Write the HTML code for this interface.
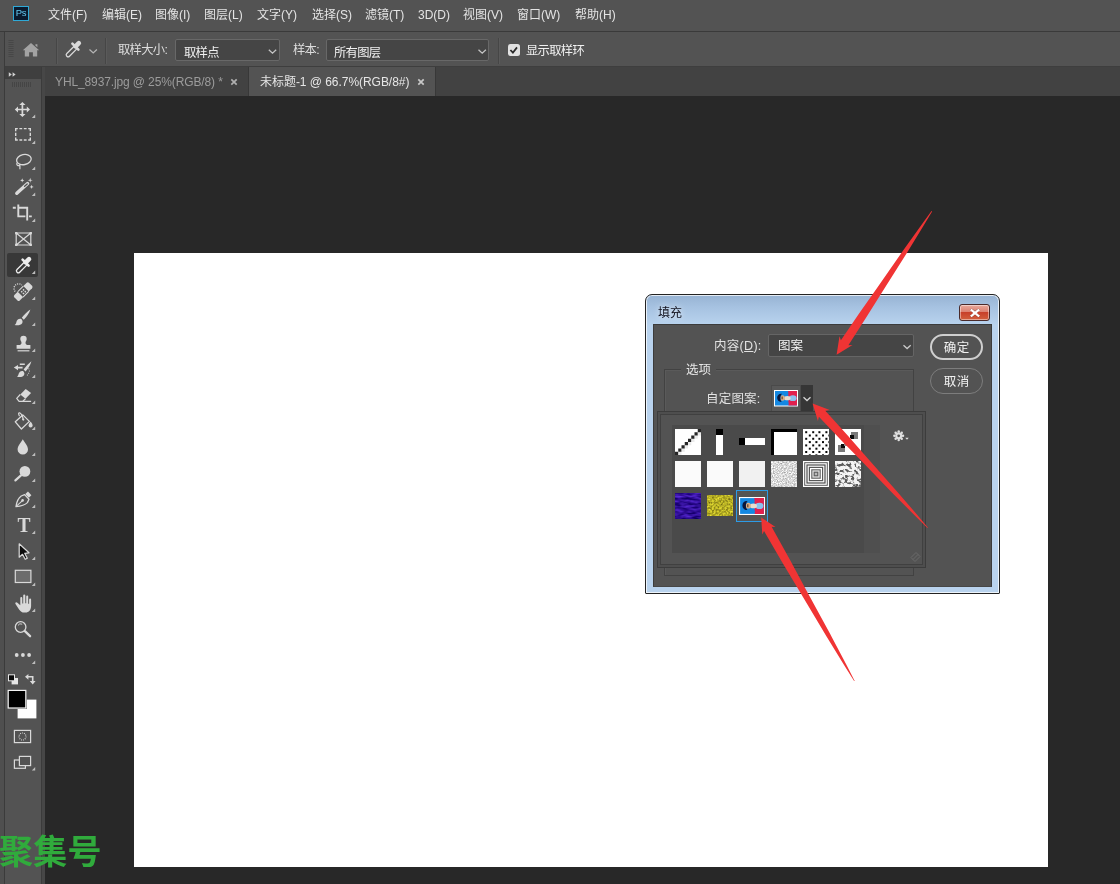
<!DOCTYPE html>
<html lang="zh-CN">
<head>
<meta charset="utf-8">
<title>Photoshop - 填充</title>
<style>
*{box-sizing:border-box;margin:0;padding:0}
html,body{width:1120px;height:884px;overflow:hidden;background:#282828}
body{position:relative;font-family:"Liberation Sans","Noto Sans CJK SC",sans-serif;font-size:12px;color:#dcdcdc}
.abs{position:absolute}
svg{position:absolute;overflow:visible}
#menubar{left:0;top:0;width:1120px;height:31px;background:#535353}
#menubar span{position:absolute;top:7px;line-height:16px;white-space:nowrap;color:#e4e4e4}
#optbar{left:0;top:31px;width:1120px;height:36px;background:#535353;border-top:1px solid #3a3a3a;border-bottom:1px solid #3e3e3e}
#leftedge{left:0;top:32px;width:5px;height:852px;background:#4f4f4f;border-right:1px solid #3b3b3b}
#tabbar{left:42px;top:67px;width:1078px;height:29px;background:#424242}
.tab{position:absolute;top:0;height:29px;line-height:31px;white-space:nowrap;font-size:12px}
#toolbar{left:5px;top:67px;width:36px;height:817px;background:#535353}
#toolhead{left:5px;top:67px;width:36px;height:12px;background:#3f3f3f}
#dockedge{left:41px;top:67px;width:3.600px;height:817px;background:#474747;border-left:1px solid #3b3b3b}
#canvas{left:134px;top:253px;width:914px;height:614px;background:#fff}
.dd{background:#454545;border:1px solid #686868;border-radius:2px;height:22px;top:39px}
.lbl{white-space:nowrap;line-height:16px;color:#dddddd;font-size:12.3px;letter-spacing:-0.7px}
.sep{width:2px;top:38px;height:26px;border-left:1px solid #464646;border-right:1px solid #5a5a5a}

#dlg{left:645px;top:294px;width:355px;height:300px;border:1px solid #232323;border-radius:7px 7px 1px 1px;background:linear-gradient(#97b3d3 0px,#a6c2e1 12px,#b9d3ee 30px,#b9d3ee 100%);box-shadow:inset 0 0 0 1px rgba(255,255,255,.75)}
#dlgtitle{left:12px;top:10px;color:#10101c;font-size:12px;line-height:16px;text-shadow:0 0 6px rgba(255,255,255,.9)}
#dlgclose{left:313px;top:9px;width:31px;height:17px;border:1px solid #4a2a2a;border-radius:3px;background:linear-gradient(#e9a99c 0,#dc8272 45%,#c8402a 50%,#d2603e 100%);box-shadow:inset 0 0 0 1px rgba(255,255,255,.45)}
#dlgbody{left:7px;top:29px;width:339px;height:263px;background:#535353;border:1px solid #3c3c3c;border-bottom-color:#474747}
.dl{position:absolute;white-space:nowrap;line-height:16px;color:#e2e2e2;font-size:12.5px}
.pill{position:absolute;left:276px;width:53px;height:26px;border-radius:13px;text-align:center;line-height:22px;color:#f2f2f2;font-size:12.5px;letter-spacing:.6px;text-indent:.6px;padding-top:1px}
.th{position:absolute;width:26px;height:26px;background:#fff;overflow:hidden}
</style>
</head>
<body>
<div id="app" style="position:absolute;left:0;top:0;width:1120px;height:884px;will-change:transform">
<!-- ===== menu bar ===== -->
<div id="menubar" class="abs">
<span style="left:48px">文件(F)</span>
<span style="left:102px">编辑(E)</span>
<span style="left:155px">图像(I)</span>
<span style="left:204px">图层(L)</span>
<span style="left:257px">文字(Y)</span>
<span style="left:312px">选择(S)</span>
<span style="left:365px">滤镜(T)</span>
<span style="left:418px">3D(D)</span>
<span style="left:463px">视图(V)</span>
<span style="left:517px">窗口(W)</span>
<span style="left:575px">帮助(H)</span>
</div>
<div class="abs" style="left:13px;top:6px;width:16px;height:15px;background:#0a1a2e;border:1px solid #2fa9d6;color:#62c6ee;font-size:9.5px;line-height:12.5px;text-align:center;letter-spacing:-0.2px">Ps</div>
<!-- ===== options bar ===== -->
<div id="optbar" class="abs"></div>
<div class="abs sep" style="left:56px"></div>
<div class="abs sep" style="left:105px"></div>
<div class="abs sep" style="left:498px"></div>
<div class="abs lbl" style="left:118px;top:42px">取样大小:</div>
<div class="abs dd" style="left:175px;width:105px"></div>
<div class="abs lbl" style="left:184px;top:44.500px;color:#f0f0f0">取样点</div>
<div class="abs lbl" style="left:293px;top:42px">样本:</div>
<div class="abs dd" style="left:326px;width:163px"></div>
<div class="abs lbl" style="left:334px;top:44.500px;color:#f0f0f0">所有图层</div>
<div class="abs" style="left:508px;top:44px;width:11.500px;height:11.500px;background:#e2e2e2;border-radius:2.500px"></div>
<div class="abs lbl" style="left:526px;top:43.300px;color:#f0f0f0">显示取样环</div>
<!-- ===== document tabs ===== -->
<div id="tabbar" class="abs">
<div class="tab" style="left:2px;width:205px;padding-left:11px;color:#9c9c9c;letter-spacing:-0.12px;border-right:1px solid #383838">YHL_8937.jpg @ 25%(RGB/8) *</div>
<div class="tab" style="left:207px;width:187px;padding-left:11px;background:#535353;color:#e6e6e6;letter-spacing:-0.04px;border-right:1px solid #383838">未标题-1 @ 66.7%(RGB/8#)</div>
</div>
<!-- ===== left tool strip ===== -->
<div id="leftedge" class="abs"></div>
<div id="toolbar" class="abs"></div>
<div id="toolhead" class="abs"></div>
<div id="dockedge" class="abs"></div>
<!--TOOLS-BEGIN-->
<svg id="tools" style="left:0;top:0" width="60" height="884" viewBox="0 0 60 884" fill="none" stroke="none">
<path d="M8.8 72.2l3 2.3-3 2.3zM12.6 72.2l3 2.3-3 2.3z" fill="#d0d0d0"/>
<path d="M12.5 82v5M14.5 82v5M16.5 82v5M18.5 82v5M20.5 82v5M22.5 82v5M24.5 82v5M26.5 82v5M28.5 82v5M30.5 82v5" stroke="#454545" stroke-width="1"/>
<rect x="7" y="253" width="31" height="24" rx="2" fill="#383838"/>
<path d="M35.2 114.6v3.4h-3.4zM35.2 140.6v3.4h-3.4zM35.2 166.6v3.4h-3.4zM35.2 192.6v3.4h-3.4zM35.2 218.6v3.4h-3.4zM35.2 270.6v3.4h-3.4zM35.2 296.6v3.4h-3.4zM35.2 322.6v3.4h-3.4zM35.2 348.6v3.4h-3.4zM35.2 374.6v3.4h-3.4zM35.2 400.6v3.4h-3.4zM35.2 426.6v3.4h-3.4zM35.2 452.6v3.4h-3.4zM35.2 478.6v3.4h-3.4zM35.2 504.6v3.4h-3.4zM35.2 530.6v3.4h-3.4zM35.2 556.6v3.4h-3.4zM35.2 582.6v3.4h-3.4zM35.2 608.6v3.4h-3.4zM35.2 660.6v3.4h-3.4zM35.2 767v3.4h-3.4z" fill="#bdbdbd"/>
<path d="M21.55 105.10L19.30 105.10L22.40 101.90L25.50 105.10L23.25 105.10L23.25 108.65L26.80 108.65L26.80 106.40L30.00 109.50L26.80 112.60L26.80 110.35L23.25 110.35L23.25 113.90L25.50 113.90L22.40 117.10L19.30 113.90L21.55 113.90L21.55 110.35L18.00 110.35L18.00 112.60L14.80 109.50L18.00 106.40L18.00 108.65L21.55 108.65z" fill="#d9d9d9"/>
<path d="M15 128.6h2.8M19.4 128.6h2.8M23.8 128.6h2.8M28.2 128.6h2.8M15 140.0h2.8M19.4 140.0h2.8M23.8 140.0h2.8M28.2 140.0h2.8M15.7 128v3.2M15.7 132.7v3.2M15.7 137.4v3.2M30.3 128v3.2M30.3 132.7v3.2M30.3 137.4v3.2" stroke="#d9d9d9" stroke-width="1.4"/>
<ellipse cx="23.9" cy="159.6" rx="7.4" ry="5" transform="rotate(-12 23.9 159.6)" stroke="#d9d9d9" stroke-width="1.3"/>
<path d="M17.2 162.8a1.7 1.7 0 1 0 2.9 1.6M19.9 165.2v4" stroke="#d9d9d9" stroke-width="1.2"/>
<path d="M16.8 193.3L27.6 183.6" stroke="#d9d9d9" stroke-width="3.4" stroke-linecap="round"/>
<path d="M24.6 186.3l2.6-2.3" stroke="#535353" stroke-width="1.3" stroke-linecap="round"/>
<path d="M22.2 178.3L22.75 179.85L24.3 180.4L22.75 180.95000000000002L22.2 182.5L21.65 180.95000000000002L20.099999999999998 180.4L21.65 179.85zM30.2 177.7L30.75 179.64999999999998L32.7 180.2L30.75 180.75L30.2 182.7L29.65 180.75L27.7 180.2L29.65 179.64999999999998zM31.6 184.8L32.15 186.35L33.7 186.9L32.15 187.45000000000002L31.6 189.0L31.05 187.45000000000002L29.5 186.9L31.05 186.35z" fill="#d9d9d9"/>
<path d="M12.8 207.8h3M18.3 204.5v12.8M19.2 207.8h8.9M27.2 206.9v13.7M17.4 216.4h8M29 216.4h2.8" stroke="#d9d9d9" stroke-width="1.9"/>
<path d="M16.2 233h14.6v12h-14.6zM16.2 233l14.6 12M30.8 233l-14.6 12" stroke="#d9d9d9" stroke-width="1.2"/>
<path d="M15.1 231.9h2.3v2.3h-2.3zM29.6 231.9h2.3v2.3h-2.3zM15.1 243.8h2.3v2.3h-2.3zM29.6 243.8h2.3v2.3h-2.3z" fill="#d9d9d9"/>
<g transform="translate(0 0)"><path d="M24.3 262.2L17 269.5a1.9 1.9 0 0 0 2.7 2.7L27 264.9" stroke="#ececec" stroke-width="1.3"/><path d="M22.6 259.6l6 6" stroke="#ececec" stroke-width="2.6" stroke-linecap="round"/><path d="M25.8 262.4l3.2-3.2" stroke="#ececec" stroke-width="4.6" stroke-linecap="round"/></g>
<g transform="rotate(-45 23.2 291.6)"><rect x="12.9" y="287.8" width="20.6" height="7.6" rx="1.6" fill="#d9d9d9"/><rect x="19.2" y="287.8" width="8" height="7.6" fill="#535353"/><path d="M21.3 289.9h1.5v1.5h-1.5zM23.9 289.9h1.5v1.5h-1.5zM21.3 292.4h1.5v1.5h-1.5zM23.9 292.4h1.5v1.5h-1.5z" fill="#d9d9d9"/><path d="M19.2 287.8h8M19.2 295.4h8" stroke="#d9d9d9" stroke-width="1"/></g>
<path d="M15.2 291.5a4.6 4.6 0 0 1 6.6-6.4" stroke="#d9d9d9" stroke-width="1.3" stroke-dasharray="1.1 1.1"/>
<g transform="translate(0 0)"><path d="M30.4 309.6c-2.6 1.6-6.6 5.4-8.6 8.2l2 2c2.6-2.4 5.6-6.8 6.6-10.2z" fill="#d9d9d9"/><path d="M21 318.8c-2.8-0.4-4.2 1.4-4.6 3.2-0.2 1.4-0.8 2.4-1.8 3 3 0.8 6.200 0.200 7.600-1.800 0.800-1.400 0.400-3.200-1.200-4.400z" fill="#d9d9d9"/></g>
<path d="M23.5 335.7a3.2 3.2 0 0 1 3.200 3.200c0 1.400-1.200 2.400-1.200 3.800 0 1 0.500 1.800 1.500 2.300h3.400v3.800h-13.800v-3.800h3.400c1-0.500 1.500-1.300 1.500-2.300 0-1.400-1.200-2.400-1.200-3.800a3.200 3.200 0 0 1 3.200-3.200z" fill="#d9d9d9"/>
<path d="M17.6 350.8h11.800" stroke="#d9d9d9" stroke-width="1.2"/>
<g transform="translate(1 51.6) scale(1)"><path d="M30.4 309.6c-2.400 1.800-6 5.600-7.800 8.400l2 1.800c2.400-2.400 5-6.800 5.800-10.200z" fill="#d9d9d9"/><path d="M22 319.400c-2.600-0.400-4 1.200-4.400 3-0.200 1.200-0.800 2.200-1.600 2.800 2.800 0.600 5.800 0.200 7-1.600 0.800-1.400 0.400-3-1-4.200z" fill="#d9d9d9"/></g>
<path d="M13.800 367.600l4.200-2.700v1.900h4.600v1.600h-4.600v1.900zM19.800 363.600h5v1.400h-5z" fill="#d9d9d9"/>
<path d="M28.800 368.400v0.900M29.400 370.600v0.900M28.600 372.800v0.900M27.400 374.600v0.900" stroke="#d9d9d9" stroke-width="1"/>
<path d="M25.700 389l5.400 3.900-5.600 5.900-5.200-4.300z" fill="#d9d9d9"/>
<path d="M20.300 394.500l-3.600 3.800 2.400 3.100h3.400l3-2.600M19.100 401.400h12" stroke="#d9d9d9" stroke-width="1.200" stroke-linejoin="round"/>
<path d="M22.800 414.900l6.600 6.500-8 7.600-6.100-7.200z" stroke="#d9d9d9" stroke-width="1.300" stroke-linejoin="round"/>
<path d="M22.900 419.800c0.400-2.600-1.400-6.200-3.200-7-1.400-0.400-1.400 1.400-0.200 3.400" stroke="#d9d9d9" stroke-width="1.200"/>
<circle cx="23.300" cy="419.600" r="1.100" fill="#d9d9d9"/>
<path d="M30.600 421.600c1 1.400 2 2.800 2 4a2 2 0 0 1-4 0c0-1.200 1-2.600 2-4z" fill="#d9d9d9"/>
<path d="M22.800 439.200c1.800 3.200 5.200 6.800 5.200 10.200a5.200 5.200 0 0 1-10.400 0c0-3.400 3.400-7 5.200-10.200z" fill="#d9d9d9"/>
<circle cx="24.900" cy="471.400" r="5.400" fill="#d9d9d9"/><path d="M21 475.400l-5.600 5" stroke="#d9d9d9" stroke-width="2.200" stroke-linecap="round"/>
<path d="M16 506.600c0.600-4.600 2.400-8.600 5.200-10.600l3.400-1.400 4.400 4.600-1.600 3.400c-2.400 2.400-6.800 3.600-11.400 4z" stroke="#d9d9d9" stroke-width="1.300" stroke-linejoin="round"/>
<path d="M16.200 506.400l6-5.600" stroke="#d9d9d9" stroke-width="1.100"/><circle cx="22.600" cy="500.400" r="1.300" fill="#d9d9d9"/>
<path d="M25.300 494l2.700-2.400 3.400 3.600-2.500 2.600z" fill="#d9d9d9"/>
<path d="M19.200 543.800v13.400l3.300-2.900 2.700 5 2.100-1.100-2.600-4.900 4.300-0.500z" fill="#0c0c0c" stroke="#d9d9d9" stroke-width="1.200" stroke-linejoin="round"/>
<rect x="15.300" y="570.300" width="15.600" height="12.200" fill="#6c6c6c" stroke="#d9d9d9" stroke-width="1.200"/>
<path d="M20.300 605.200v-7.200a1 1 0 0 1 2 0v5.400h0.900v-7.800a1.050 1.050 0 0 1 2.100 0v7.600h0.900v-6.800a1 1 0 0 1 2 0v7.400h0.900v-4.400a1 1 0 0 1 2 0v6.600c0 3.600-2.200 6.600-5.600 6.600h-1.200c-2.400 0-3.800-1.200-5.200-3.200l-3.600-5.400c-0.800-1.400 0.800-2.400 1.900-1.200z" fill="#d9d9d9"/>
<circle cx="20.600" cy="627" r="5.300" stroke="#d9d9d9" stroke-width="1.300"/><path d="M24.900 631.200l5.200 5" stroke="#d9d9d9" stroke-width="2.300" stroke-linecap="round"/><path d="M18 625.400a3.200 3.200 0 0 1 4.200-1.200" stroke="#d9d9d9" stroke-width="0.900"/>
<circle cx="16.700" cy="655" r="1.900" fill="#d9d9d9"/><circle cx="22.900" cy="655" r="1.900" fill="#d9d9d9"/><circle cx="29.100" cy="655" r="1.900" fill="#d9d9d9"/>
<rect x="11.600" y="678" width="6.400" height="6.400" fill="#e6e6e6"/><rect x="8.500" y="674.800" width="6" height="6" fill="#0a0a0a" stroke="#e6e6e6" stroke-width="1"/>
<path d="M25 676.800l3.400-2.900v2.100h5.100v5h2.100l-2.900 3.400-2.900-3.400h2.100v-3.400h-3.500v2.100z" fill="#d9d9d9"/>
<rect x="17.600" y="699.600" width="18.800" height="18.800" fill="#fff"/>
<rect x="7.200" y="689.400" width="19.600" height="19.600" fill="#535353"/>
<rect x="8.200" y="690.400" width="17.600" height="17.600" fill="#000" stroke="#f4f4f4" stroke-width="1.200"/>
<rect x="14.400" y="730.400" width="16.200" height="12.200" stroke="#d9d9d9" stroke-width="1.200"/><circle cx="22.500" cy="736.500" r="3.500" stroke="#d9d9d9" stroke-width="1.100" stroke-dasharray="0.900 1.050"/>
<rect x="14.400" y="760" width="11" height="8.300" stroke="#d9d9d9" stroke-width="1.200"/><rect x="19.400" y="756.400" width="11.200" height="9.200" fill="#535353" stroke="#d9d9d9" stroke-width="1.200"/>
</svg>
<!--TOOLS-END-->
<div class="abs" style="left:15px;top:513px;width:18px;height:24px;line-height:24px;text-align:center;font-family:'Liberation Serif',serif;font-weight:bold;font-size:21px;color:#d9d9d9;transform:scaleX(0.93)">T</div>
<!-- options bar icons -->
<svg id="opticons" style="left:0;top:0" width="640" height="100" viewBox="0 0 640 100" fill="none">
<path d="M8.500 40.500h5M8.500 42.500h5M8.500 44.500h5M8.500 46.500h5M8.500 48.500h5M8.500 50.500h5M8.500 52.500h5M8.500 54.500h5M8.500 56.500h5" stroke="#474747" stroke-width="1"/>
<path d="M31 43l8.200 7.200h-2v6.300h-4.300v-4.300h-3.800v4.300h-4.300v-6.300h-2zM35.400 44.200h2v3l-2-1.800z" fill="#a3a3a3"/>
<g transform="translate(49.800 -216)"><path d="M24.300 262.200L17 269.500a1.900 1.900 0 0 0 2.700 2.700L27 264.900" stroke="#d9d9d9" stroke-width="1.300"/><path d="M22.600 259.600l6 6" stroke="#d9d9d9" stroke-width="2.600" stroke-linecap="round"/><path d="M25.800 262.400l3.200-3.200" stroke="#d9d9d9" stroke-width="4.600" stroke-linecap="round"/></g>
<path d="M89.500 49.500l3.700 3.400 3.700-3.400" stroke="#b4b4b4" stroke-width="1.300"/>
<path d="M268.800 49.800l3.700 3.400 3.700-3.400M478.500 49.800l3.700 3.400 3.700-3.400" stroke="#c4c4c4" stroke-width="1.300"/>
<path d="M510.400 50l2.500 2.700 4.100-5.300" stroke="#2a2a2a" stroke-width="1.800"/>
<path d="M231.300 79.300l5.400 5.400M236.700 79.300l-5.400 5.400" stroke="#b0b0b0" stroke-width="1.700"/>
<path d="M418.300 79.300l5.400 5.400M423.700 79.300l-5.400 5.400" stroke="#c8c8c8" stroke-width="1.700"/>
</svg>
<!-- ===== document canvas ===== -->
<div id="canvas" class="abs"></div>
<!--DIALOG-BEGIN-->
<div id="dlg" class="abs">
<div id="dlgtitle" class="abs">填充</div>
<div id="dlgclose" class="abs"><svg style="left:9.500px;top:3.500px" width="10" height="8" viewBox="0 0 12 11" preserveAspectRatio="none"><path d="M1.800 1.500l8.400 8M10.200 1.500l-8.400 8" stroke="#5a2a22" stroke-width="3.800" stroke-linecap="round" opacity=".55"/><path d="M2 1.700l8 7.600M10 1.700l-8 7.600" stroke="#fff" stroke-width="2.900" stroke-linecap="square"/></svg></div>
<div id="dlgbody" class="abs">
<!-- coordinates inside body: page x-653, page y-324 -->
<div class="dl" style="left:60px;top:13px;letter-spacing:.3px">内容(<span style="text-decoration:underline">D</span>):</div>
<div class="abs" style="left:114px;top:9px;width:146px;height:23px;background:#454545;border:1px solid #656565;border-radius:2px"></div>
<div class="dl" style="left:124px;top:13px;color:#f4f4f4">图案</div>
<div class="pill" style="top:9px;border:2px solid #cfcfcf">确定</div>
<div class="pill" style="top:43px;border:1px solid #7d7d7d;line-height:24px">取消</div>
<!-- options group -->
<div class="abs" style="left:10px;top:44px;width:250px;height:207px;border:1px solid #424242;box-shadow:inset 1px 1px 0 #5a5a5a"></div>
<div class="dl" style="left:27px;top:37px;padding:0 5px;background:#535353;color:#e6e6e6">选项</div>
<div class="dl" style="left:52px;top:66px;letter-spacing:.2px">自定图案:</div>
<div class="abs" style="left:117px;top:60px;width:30px;height:27px;background:#585858;border:1px solid #4a4a4a"></div>
<div class="abs" style="left:147px;top:60px;width:12px;height:27px;background:#363636"></div>
<!--PATTHUMB-BEGIN-->
<div class="abs" style="left:120px;top:65px;width:24px;height:16px"><svg width="24" height="16.5" viewBox="0 0 26 18" preserveAspectRatio="none" style="left:0;top:0"><rect width="26" height="18" fill="#fff"/><rect x="1.100" y="1.100" width="23.800" height="15.800" fill="#1488e2"/><path d="M15.200 1.100h9.700v15.800h-9.300c0.600-2 0.300-3.400-0.200-5 1.500-1.500 1.500-4.500 0-6 0.400-1.600 0.200-3.200-0.200-4.800z" fill="#e2204e"/><ellipse cx="20.400" cy="8.900" rx="4.100" ry="3.100" fill="#8cc2ee"/><ellipse cx="14.400" cy="8.900" rx="3.600" ry="2.300" fill="#e9dccf"/><ellipse cx="9.300" cy="8.700" rx="2.500" ry="2.900" fill="#ddae84"/><path d="M8.600 4c-3.400-0.300-5.200 1.900-5.200 4.500s2 4.800 5 4.500c-1-1-1.500-2.600-1.500-4.300s0.500-3.500 1.700-4.700z" fill="#0b1638"/><path d="M8.200 7.200h1.200v3h-1.200z" fill="#3a2418" opacity=".8"/></svg></div><svg style="left:0;top:0" width="340" height="100" viewBox="0 0 340 100" fill="none"><path d="M249.500 20.300l3.600 3.300 3.600-3.300" stroke="#c9c9c9" stroke-width="1.300"/><path d="M149.500 72.300l3.500 3.200 3.500-3.200" stroke="#d4d4d4" stroke-width="1.300"/></svg>
<!--PATTHUMB-END-->
<!--PICKER-BEGIN-->
<div id="picker" class="abs" style="left:3px;top:86px;width:269px;height:157px;background:#535353;border:1px solid #3c3c3c;box-shadow:inset 0 0 0 2px #4e4e4e,inset 0 0 0 3px #404040">
<svg width="0" height="0" style="left:0;top:0"><defs><filter id="nzg" x="0" y="0" width="100%" height="100%" color-interpolation-filters="sRGB"><feTurbulence type="fractalNoise" baseFrequency="0.8" numOctaves="2" seed="11" result="t"/><feColorMatrix in="t" type="matrix" values="0.7 0 0 0 0.5  0.7 0 0 0 0.5  0.7 0 0 0 0.5  0 0 0 0 1"/></filter><filter id="nzb" x="0" y="0" width="100%" height="100%" color-interpolation-filters="sRGB"><feTurbulence type="fractalNoise" baseFrequency="0.3 0.34" numOctaves="2" seed="5" result="t"/><feColorMatrix in="t" type="matrix" values="6 0 0 0 -2.1  6 0 0 0 -2.1  6 0 0 0 -2.1  0 0 0 0 1" result="c"/><feComponentTransfer in="c"><feFuncR type="table" tableValues="0.36 0.96"/><feFuncG type="table" tableValues="0.36 0.96"/><feFuncB type="table" tableValues="0.36 0.96"/></feComponentTransfer></filter><filter id="nzp" x="0" y="0" width="100%" height="100%" color-interpolation-filters="sRGB"><feTurbulence type="fractalNoise" baseFrequency="0.12 0.4" numOctaves="2" seed="2" result="t"/><feColorMatrix in="t" type="matrix" values="0.45 0 0 0 -0.03  0.3 0 0 0 -0.09  0.7 0 0 0 0.25  0 0 0 0 1"/></filter><filter id="nzy" x="0" y="0" width="100%" height="100%" color-interpolation-filters="sRGB"><feTurbulence type="fractalNoise" baseFrequency="0.55" numOctaves="2" seed="9" result="t"/><feColorMatrix in="t" type="matrix" values="0.7 0 0 0 0.36  0.7 0 0 0 0.33  0.2 0 0 0 0.04  0 0 0 0 1"/></filter></defs></svg>
<div id="grid" class="abs" style="left:14px;top:13px;width:208px;height:128px;background:#4a4a4a">
<div class="abs" style="left:192px;top:0;width:16px;height:128px;background:#4f4f4f"></div>
<div class="th" style="left:3px;top:4px;"><svg width="26" height="26" style="left:0;top:0"><rect x="0.00" y="22.75" width="3.250" height="3.250" fill="#262626"/><rect x="3.25" y="22.75" width="3.250" height="3.250" fill="#d8d8d8" opacity=".5"/><rect x="3.25" y="19.50" width="3.250" height="3.250" fill="#262626"/><rect x="6.50" y="19.50" width="3.250" height="3.250" fill="#d8d8d8" opacity=".5"/><rect x="6.50" y="16.25" width="3.250" height="3.250" fill="#262626"/><rect x="9.75" y="16.25" width="3.250" height="3.250" fill="#d8d8d8" opacity=".5"/><rect x="9.75" y="13.00" width="3.250" height="3.250" fill="#262626"/><rect x="13.00" y="13.00" width="3.250" height="3.250" fill="#d8d8d8" opacity=".5"/><rect x="13.00" y="9.75" width="3.250" height="3.250" fill="#262626"/><rect x="16.25" y="9.75" width="3.250" height="3.250" fill="#d8d8d8" opacity=".5"/><rect x="16.25" y="6.50" width="3.250" height="3.250" fill="#262626"/><rect x="19.50" y="6.50" width="3.250" height="3.250" fill="#d8d8d8" opacity=".5"/><rect x="19.50" y="3.25" width="3.250" height="3.250" fill="#262626"/><rect x="22.75" y="3.25" width="3.250" height="3.250" fill="#d8d8d8" opacity=".5"/><rect x="22.75" y="0.00" width="3.250" height="3.250" fill="#262626"/></svg></div>
<div class="th" style="left:35px;top:4px;background:none"><div class="abs" style="left:9px;top:0;width:7px;height:26px;background:#fff;border-top:6px solid #000"></div></div>
<div class="th" style="left:67px;top:4px;background:none"><div class="abs" style="left:0;top:9px;width:26px;height:7px;background:#fff;border-left:6px solid #000"></div></div>
<div class="th" style="left:99px;top:4px;border-top:3px solid #000;border-left:3px solid #000"></div>
<div class="th" style="left:131px;top:4px;"><svg width="26" height="26" style="left:0;top:0"><rect x="2.2" y="2.2" width="2" height="2" fill="#0a0a0a"/><rect x="9.2" y="2.2" width="2" height="2" fill="#0a0a0a"/><rect x="15.4" y="2.2" width="2" height="2" fill="#0a0a0a"/><rect x="22.4" y="2.2" width="2" height="2" fill="#0a0a0a"/><rect x="5.8" y="5.5" width="2" height="2" fill="#0a0a0a"/><rect x="12.4" y="5.5" width="2" height="2" fill="#0a0a0a"/><rect x="19.0" y="5.5" width="2" height="2" fill="#0a0a0a"/><rect x="25.4" y="5.5" width="2" height="2" fill="#0a0a0a"/><rect x="2.2" y="8.8" width="2" height="2" fill="#0a0a0a"/><rect x="9.2" y="8.8" width="2" height="2" fill="#0a0a0a"/><rect x="15.4" y="8.8" width="2" height="2" fill="#0a0a0a"/><rect x="22.4" y="8.8" width="2" height="2" fill="#0a0a0a"/><rect x="5.8" y="12.1" width="2" height="2" fill="#0a0a0a"/><rect x="12.4" y="12.1" width="2" height="2" fill="#0a0a0a"/><rect x="19.0" y="12.1" width="2" height="2" fill="#0a0a0a"/><rect x="25.4" y="12.1" width="2" height="2" fill="#0a0a0a"/><rect x="2.2" y="15.4" width="2" height="2" fill="#0a0a0a"/><rect x="9.2" y="15.4" width="2" height="2" fill="#0a0a0a"/><rect x="15.4" y="15.4" width="2" height="2" fill="#0a0a0a"/><rect x="22.4" y="15.4" width="2" height="2" fill="#0a0a0a"/><rect x="5.8" y="18.7" width="2" height="2" fill="#0a0a0a"/><rect x="12.4" y="18.7" width="2" height="2" fill="#0a0a0a"/><rect x="19.0" y="18.7" width="2" height="2" fill="#0a0a0a"/><rect x="25.4" y="18.7" width="2" height="2" fill="#0a0a0a"/><rect x="2.2" y="22.0" width="2" height="2" fill="#0a0a0a"/><rect x="9.2" y="22.0" width="2" height="2" fill="#0a0a0a"/><rect x="15.4" y="22.0" width="2" height="2" fill="#0a0a0a"/><rect x="22.4" y="22.0" width="2" height="2" fill="#0a0a0a"/><rect x="5.8" y="25.3" width="2" height="2" fill="#0a0a0a"/><rect x="12.4" y="25.3" width="2" height="2" fill="#0a0a0a"/><rect x="19.0" y="25.3" width="2" height="2" fill="#0a0a0a"/><rect x="25.4" y="25.3" width="2" height="2" fill="#0a0a0a"/></svg></div>
<div class="th" style="left:163px;top:4px;"><svg width="26" height="26" style="left:0;top:0"><rect x="16" y="3" width="7" height="7" fill="#7a7a7a"/><rect x="15" y="6" width="4" height="4" fill="#0a0a0a"/><rect x="11" y="9" width="5" height="5" fill="#9a9a9a"/><rect x="3" y="16" width="7" height="7" fill="#7a7a7a"/><rect x="6" y="15" width="4" height="4" fill="#0a0a0a"/><rect x="9" y="12" width="5" height="5" fill="#8a8a8a"/></svg></div>
<div class="th" style="left:3px;top:36px;background:#fbfbfb"></div>
<div class="th" style="left:35px;top:36px;background:#fafafa"></div>
<div class="th" style="left:67px;top:36px;background:#f1f1f1"></div>
<div class="th" style="left:99px;top:36px;background:#d9d9d9"><svg width="26" height="26" style="left:0;top:0"><rect width="26" height="26" filter="url(#nzg)"/></svg></div>
<div class="th" style="left:131px;top:36px;"><svg width="26" height="26" style="left:0;top:0"><rect x="0" y="0" width="26.0" height="26.0" fill="#fff"/><rect x="1.2" y="1.2" width="23.6" height="23.6" fill="#5a5a5a"/><rect x="2.2" y="2.2" width="21.6" height="21.6" fill="#fff"/><rect x="3.4" y="3.4" width="19.2" height="19.2" fill="#4e4e4e"/><rect x="4.6" y="4.6" width="16.8" height="16.8" fill="#fff"/><rect x="5.8" y="5.8" width="14.4" height="14.4" fill="#585858"/><rect x="7" y="7" width="12.0" height="12.0" fill="#fff"/><rect x="8.2" y="8.2" width="9.6" height="9.6" fill="#6a6a6a"/><rect x="9.4" y="9.4" width="7.2" height="7.2" fill="#e4e4e4"/><rect x="10.6" y="10.6" width="4.8" height="4.8" fill="#606060"/><rect x="11.8" y="11.8" width="2.4" height="2.4" fill="#b8b8b8"/></svg></div>
<div class="th" style="left:163px;top:36px;background:#aaa"><svg width="26" height="26" style="left:0;top:0"><rect width="26" height="26" filter="url(#nzb)"/></svg></div>
<div class="th" style="left:3px;top:68px;background:#2a0c9c"><svg width="26" height="26" style="left:0;top:0"><rect width="26" height="26" filter="url(#nzp)"/></svg></div>
<div class="th" style="left:35px;top:70px;height:21px;background:#c4bc1e"><svg width="26" height="21" style="left:0;top:0"><rect width="26" height="21" filter="url(#nzy)"/></svg></div>
<div class="abs" style="left:64px;top:65px;width:32px;height:32px;border:1px solid #2d9be6;background:#545454"></div>
<div class="abs" style="left:67px;top:72px;width:26px;height:18px"><svg width="26" height="18" viewBox="0 0 26 18" preserveAspectRatio="none" style="left:0;top:0"><rect width="26" height="18" fill="#fff"/><rect x="1.100" y="1.100" width="23.800" height="15.800" fill="#1488e2"/><path d="M15.200 1.100h9.700v15.800h-9.300c0.600-2 0.300-3.400-0.200-5 1.500-1.500 1.500-4.500 0-6 0.400-1.600 0.200-3.200-0.200-4.800z" fill="#e2204e"/><ellipse cx="20.400" cy="8.900" rx="4.100" ry="3.100" fill="#8cc2ee"/><ellipse cx="14.400" cy="8.900" rx="3.600" ry="2.300" fill="#e9dccf"/><ellipse cx="9.300" cy="8.700" rx="2.500" ry="2.900" fill="#ddae84"/><path d="M8.600 4c-3.400-0.300-5.200 1.900-5.200 4.500s2 4.800 5 4.500c-1-1-1.500-2.600-1.500-4.300s0.500-3.500 1.700-4.700z" fill="#0b1638"/><path d="M8.200 7.200h1.200v3h-1.200z" fill="#3a2418" opacity=".8"/></svg></div>
</div>
<svg style="left:235px;top:18px" width="18" height="12" viewBox="0 0 18 12"><g fill="#e0e0e0"><circle cx="5.700" cy="5.800" r="3.500"/>
<circle cx="10.00" cy="5.80" r="1.250"/><circle cx="8.74" cy="8.84" r="1.250"/><circle cx="5.70" cy="10.10" r="1.250"/><circle cx="2.66" cy="8.84" r="1.250"/><circle cx="1.40" cy="5.80" r="1.250"/><circle cx="2.66" cy="2.76" r="1.250"/><circle cx="5.70" cy="1.50" r="1.250"/><circle cx="8.74" cy="2.76" r="1.250"/></g><circle cx="5.700" cy="5.800" r="1.400" fill="#535353"/><path d="M12.300 7.800h3.400l-1.700 1.900z" fill="#e0e0e0"/></svg>
<svg style="left:252px;top:140px" width="11" height="10" viewBox="0 0 11 10"><path d="M1 5.500l5-5 4 4-5 5zM3 7.500l5-5" stroke="#6c6c6c" stroke-width="0.900" fill="none"/></svg>
</div>
<!--PICKER-END-->
</div>
</div>
<!--DIALOG-END-->
<!--ARROWS-BEGIN-->
<svg id="arrows" style="left:0;top:0" width="1120" height="884" viewBox="0 0 1120 884"><path d="M836.6 354.8L852.5 344.9L848.4 345.2L865.7 318.3L882.2 292.0L907.0 252.7L923.2 226.2L932.1 211.4L931.5 211.0L921.4 225.0L903.3 250.2L876.7 288.4L858.9 313.8L840.9 340.2L839.5 336.3zM812.6 403.4L817.9 420.9L818.9 416.7L840.7 439.7L862.0 461.6L893.8 494.5L915.3 516.1L927.4 528.0L927.8 527.6L916.9 514.6L897.0 491.5L866.7 457.2L846.6 434.3L825.3 410.7L829.7 410.1zM761.2 517.4L762.3 534.6L764.0 531.1L782.9 563.5L800.3 592.6L826.4 636.3L844.2 665.2L854.1 681.1L854.7 680.9L846.0 664.1L830.2 634.1L805.9 589.4L789.8 559.6L771.6 526.8L775.5 527.1z" fill="#f03434"/></svg>
<!--ARROWS-END-->
<!--WATERMARK-BEGIN-->
<div class="abs" style="left:-1px;top:830px;font-size:34px;line-height:44px;color:#30ab3c;white-space:nowrap;font-weight:700;letter-spacing:.3px">聚集号</div>
<!--WATERMARK-END-->
</div>
</body>
</html>
